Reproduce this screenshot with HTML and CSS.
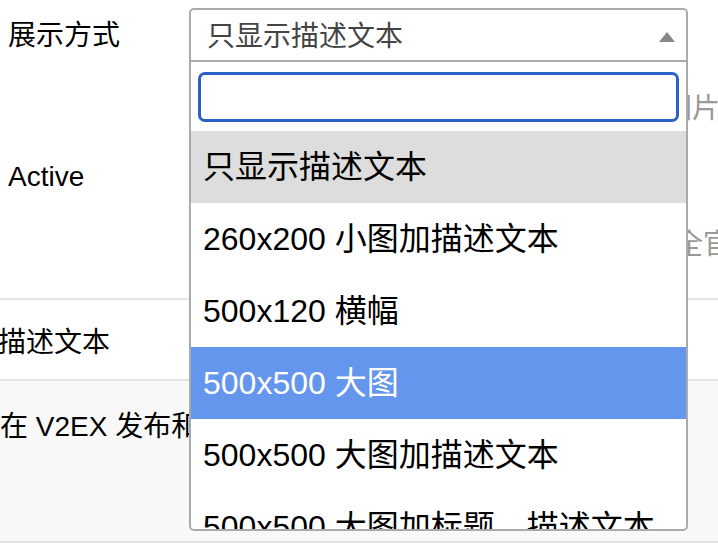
FILE: index.html
```html
<!DOCTYPE html>
<html lang="zh-CN">
<head>
<meta charset="utf-8">
<title>展示方式</title>
<link rel="stylesheet" href="styles.css">
</head>
<body>
<div class="page">
  <section class="form-top">
    <div class="field field-mode">
      <div class="label">展示方式</div>
      <div class="control">
        <div class="select-stub"></div>
        <p class="hint hint-mode">选择广告在页面中的展示方式以及对应图片</p>
      </div>
    </div>
    <div class="field field-active">
      <div class="label label-active">Active</div>
      <div class="control control-active">
        <p class="hint hint-active">启用后该广告会立即显示在所有页面，全官方可见</p>
      </div>
    </div>
  </section>
  <div class="row row-desc">描述文本</div>
  <div class="row row-note">在 V2EX 发布和推广的所有广告均需遵守社区规则</div>

  <div class="dropdown">
    <div class="sel-head">
      <span class="sel-text">只显示描述文本</span>
      <svg class="arrow" width="16" height="10" viewBox="0 0 16 10"><polygon points="0,10 8,0 16,10" fill="#888"/></svg>
    </div>
    <div class="search"><input class="search-input" type="text"></div>
    <ul class="results">
      <li class="opt is-selected">只显示描述文本</li>
      <li class="opt">260x200 小图加描述文本</li>
      <li class="opt">500x120 横幅</li>
      <li class="opt is-highlighted">500x500 大图</li>
      <li class="opt">500x500 大图加描述文本</li>
      <li class="opt">500x500 大图加标题、描述文本</li>
    </ul>
  </div>
</div>
</body>
</html>
```

FILE: styles.css
```css
html, body {
  margin: 0;
  padding: 0;
  background: #fff;
}
body {
  width: 718px;
  height: 558px;
  overflow: hidden;
  font-family: "Liberation Sans", "Noto Sans CJK SC", sans-serif;
  font-size: 28px;
  color: #000;
}
.page {
  position: relative;
  width: 718px;
  height: 558px;
}
p { margin: 0; }

.form-top {
  height: 298px;
  border-bottom: 2px solid #e4e4e4;
}
.field {
  display: grid;
  grid-template-columns: 189px 1fr;
}
.label {
  padding-left: 8px;
  padding-top: 16px;
  line-height: 40px;
  white-space: nowrap;
}
.label-active {
  padding-top: 28px;
}
.control {
  min-width: 0;
}
.select-stub {
  height: 54px;
  margin-top: 8px;
}
.hint {
  color: #999;
  line-height: 40px;
  white-space: nowrap;
}
.hint-mode {
  margin-top: 27px;
  margin-left: -1px;
}
.control-active {
  padding-top: 96px;
}
.hint-active {
  margin-left: 10px;
}

.row {
  white-space: nowrap;
  line-height: 40px;
}
.row-desc {
  height: 81px;
  box-sizing: border-box;
  padding-top: 23px;
  margin-left: -2px;
  border-bottom: 2px solid #e4e4e4;
}
.row-note {
  height: 162px;
  box-sizing: border-box;
  padding-top: 26px;
  background: #f8f8f8;
  border-bottom: 2px solid #e4e4e4;
}

/* select2-like open dropdown (overlay) */
.dropdown {
  position: absolute;
  left: 189px;
  top: 8px;
  width: 499px;
  box-sizing: border-box;
  border: 2px solid #aaa;
  border-radius: 5px;
  background: #fff;
  overflow: hidden;
}
.sel-head {
  height: 52px;
  box-sizing: border-box;
  padding: 4px 11px 0 16px;
  display: flex;
  align-items: center;
  justify-content: space-between;
  border-bottom: 2px solid #aaa;
  color: #444;
  line-height: 40px;
}
.arrow {
  display: block;
  flex: none;
}
.search {
  padding: 10px 7px 9px 7px;
}
.search-input {
  display: block;
  width: 100%;
  height: 50px;
  box-sizing: border-box;
  border: 3px solid #2b60c6;
  border-radius: 7px;
  outline: none;
  background: #fff;
  margin: 0;
  padding: 0 8px;
  font: inherit;
}
.results {
  list-style: none;
  margin: 0;
  padding: 0;
  height: 398px;
  overflow: hidden;
}
.opt {
  height: 72px;
  box-sizing: border-box;
  padding: 0 12px;
  font-size: 32px;
  line-height: 72px;
  white-space: nowrap;
  color: #000;
}
.opt.is-selected {
  background: #ddd;
}
.opt.is-highlighted {
  background: #6596ee;
  color: #fff;
}
```
